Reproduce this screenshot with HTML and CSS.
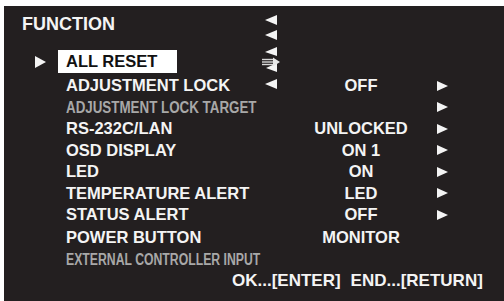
FILE: index.html
```html
<!DOCTYPE html>
<html>
<head>
<meta charset="utf-8">
<link rel="stylesheet" href="styles.css">
</head>
<body>
<div class="osd">
  <div class="title">FUNCTION</div>
  <svg class="ghost" width="22" height="78" viewBox="0 0 22 78">
    <polygon points="4,6 16,1 16,11" fill="#f4f4f4"/>
    <polygon points="4,21 16,16 16,26" fill="#f4f4f4"/>
    <polygon points="4,38 16,33 16,42" fill="#f4f4f4"/>
    <polygon points="5,54 16,49 16,58" fill="#f4f4f4"/>
    <g stroke="#d8d8d8" stroke-width="1.4">
      <line x1="1" y1="45.5" x2="13" y2="45.5"/>
      <line x1="1" y1="48" x2="13" y2="48"/>
      <line x1="1" y1="50.5" x2="13" y2="50.5"/>
    </g>
    <polygon points="12,43.5 19,48 12,52.5" fill="#e8e8e8"/>
    <polygon points="4,70 16,65 16,75" fill="#f4f4f4"/>
  </svg>
  <div class="list">
    <div class="row sel">
      <div class="mark"><svg width="11" height="12" viewBox="0 0 11 12"><polygon points="0,0 11,6 0,12" fill="#f4f4f4"/></svg></div>
      <div class="label"><span class="box">ALL RESET</span></div>
      <div class="val"></div><div></div><div></div>
    </div>
    <div class="row">
      <div class="mark"></div>
      <div class="label">ADJUSTMENT LOCK</div>
      <div class="val">OFF</div><div></div>
      <div class="arr"><svg width="11" height="10" viewBox="0 0 11 10"><polygon points="0,0 11,5 0,10" fill="#f4f4f4"/></svg></div>
    </div>
    <div class="row">
      <div class="mark"></div>
      <div class="label dim"><span class="nar1">ADJUSTMENT LOCK TARGET</span></div>
      <div class="val"></div><div></div>
      <div class="arr"><svg width="11" height="10" viewBox="0 0 11 10"><polygon points="0,0 11,5 0,10" fill="#f4f4f4"/></svg></div>
    </div>
    <div class="row">
      <div class="mark"></div>
      <div class="label">RS-232C/LAN</div>
      <div class="val">UNLOCKED</div><div></div>
      <div class="arr"><svg width="11" height="10" viewBox="0 0 11 10"><polygon points="0,0 11,5 0,10" fill="#f4f4f4"/></svg></div>
    </div>
    <div class="row">
      <div class="mark"></div>
      <div class="label">OSD DISPLAY</div>
      <div class="val">ON 1</div><div></div>
      <div class="arr"><svg width="11" height="10" viewBox="0 0 11 10"><polygon points="0,0 11,5 0,10" fill="#f4f4f4"/></svg></div>
    </div>
    <div class="row">
      <div class="mark"></div>
      <div class="label">LED</div>
      <div class="val">ON</div><div></div>
      <div class="arr"><svg width="11" height="10" viewBox="0 0 11 10"><polygon points="0,0 11,5 0,10" fill="#f4f4f4"/></svg></div>
    </div>
    <div class="row">
      <div class="mark"></div>
      <div class="label">TEMPERATURE ALERT</div>
      <div class="val">LED</div><div></div>
      <div class="arr"><svg width="11" height="10" viewBox="0 0 11 10"><polygon points="0,0 11,5 0,10" fill="#f4f4f4"/></svg></div>
    </div>
    <div class="row">
      <div class="mark"></div>
      <div class="label">STATUS ALERT</div>
      <div class="val">OFF</div><div></div>
      <div class="arr"><svg width="11" height="10" viewBox="0 0 11 10"><polygon points="0,0 11,5 0,10" fill="#f4f4f4"/></svg></div>
    </div>
    <div class="row power">
      <div class="mark"></div>
      <div class="label">POWER BUTTON</div>
      <div class="val">MONITOR</div><div></div><div></div>
    </div>
    <div class="row">
      <div class="mark"></div>
      <div class="label dim"><span class="nar2">EXTERNAL CONTROLLER INPUT</span></div>
      <div class="val"></div><div></div><div></div>
    </div>
    <div class="foot">
      <span>OK...[ENTER]</span>
      <span>END...[RETURN]</span>
    </div>
  </div>
</div>
</body>
</html>
```

FILE: styles.css
```css
html, body {
  margin: 0;
  padding: 0;
  background: #ffffff;
}
body {
  width: 504px;
  height: 301px;
  overflow: hidden;
}
.osd {
  position: relative;
  margin: 6px 0 0 4px;
  width: 500px;
  height: 295px;
  background: #231f20;
  color: #f4f4f4;
  font-family: "Liberation Sans", Arial, sans-serif;
  font-weight: bold;
  padding-top: 7px;
  box-sizing: border-box;
}
.title {
  font-size: 18px;
  line-height: 22px;
  padding-left: 18px;
}
.ghost {
  position: absolute;
  left: 257px;
  top: 8px;
}
.list {
  margin-top: 15px;
  display: flex;
  flex-direction: column;
}
.row {
  display: grid;
  grid-template-columns: 54px 242px 122px 15px 11px;
  height: 21.5px;
  align-items: center;
  font-size: 16.5px;
  line-height: 21.5px;
  white-space: nowrap;
}
.row.sel {
  height: 23px;
  line-height: 23px;
  margin-bottom: 2px;
}
.row.power {
  margin-top: 1.5px;
}
.mark {
  display: flex;
  align-items: center;
  padding-left: 31px;
}
.mark svg, .arr svg {
  display: block;
}
.label {
  padding-left: 8px;
}
.sel .label {
  padding-left: 0;
}
.box {
  display: block;
  width: 119px;
  height: 23px;
  box-sizing: border-box;
  padding-left: 8px;
  background: #ffffff;
  color: #111111;
}
.dim {
  color: #a8a8a8;
  font-size: 16px;
}
.nar1, .nar2 {
  display: inline-block;
  transform-origin: left center;
}
.nar1 {
  transform: scaleX(0.835);
}
.nar2 {
  transform: scaleX(0.765);
}
.val {
  text-align: center;
}
.arr {
  display: flex;
  align-items: center;
}
.foot {
  display: flex;
  gap: 10px;
  padding-left: 228px;
  font-size: 17px;
  line-height: 21.5px;
  white-space: nowrap;
}
```
